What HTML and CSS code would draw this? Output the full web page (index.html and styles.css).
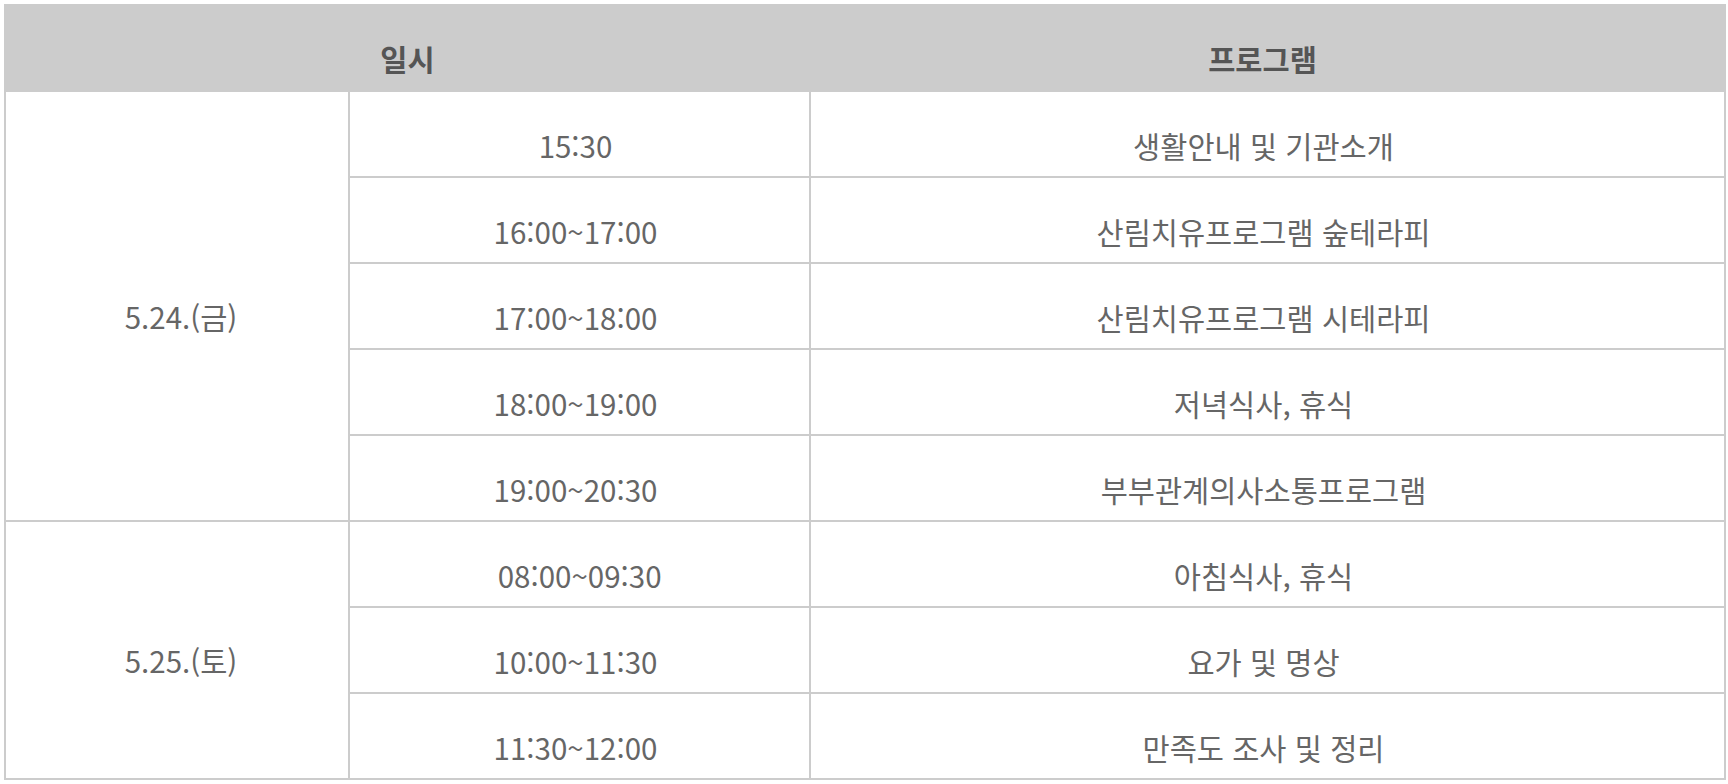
FILE: index.html
```html
<!DOCTYPE html>
<html lang="ko">
<head>
<meta charset="utf-8">
<title>일정표</title>
<link rel="stylesheet" href="styles.css">
</head>
<body>
<table class="schedule">
  <colgroup>
    <col class="c-date">
    <col class="c-time">
    <col class="c-prog">
  </colgroup>
  <thead>
    <tr><th colspan="2">일시</th><th class="h-prog">프로그램</th></tr>
  </thead>
  <tbody>
    <tr><td class="date" rowspan="5">5.24.(금)</td><td>15:30</td><td>생활안내 및 기관소개</td></tr>
    <tr><td>16:00~17:00</td><td>산림치유프로그램 숲테라피</td></tr>
    <tr><td>17:00~18:00</td><td>산림치유프로그램 시테라피</td></tr>
    <tr><td>18:00~19:00</td><td>저녁식사, 휴식</td></tr>
    <tr><td>19:00~20:30</td><td>부부관계의사소통프로그램</td></tr>
    <tr><td class="date" rowspan="3">5.25.(토)</td><td>&nbsp;08:00~09:30</td><td>아침식사, 휴식</td></tr>
    <tr><td>10:00~11:30</td><td>요가 및 명상</td></tr>
    <tr><td>11:30~12:00</td><td>만족도 조사 및 정리</td></tr>
  </tbody>
</table>
</body>
</html>
```

FILE: styles.css
```css
html, body {
  margin: 0;
  padding: 0;
  background: #fff;
}
body {
  padding: 4px 0 0 4px;
  font-family: "Noto Sans CJK KR", "Noto Sans", sans-serif;
}
.schedule {
  width: 1720px;
  border-collapse: collapse;
  table-layout: fixed;
  color: #666;
  font-size: 29.5px;
}
.c-date { width: 344px; }
.c-time { width: 461px; }
.c-prog { width: 915px; }
.schedule th,
.schedule td {
  border: 2px solid #cccccc;
  text-align: center;
  line-height: 40px;
  padding: 0;
  font-weight: 400;
}
.schedule th {
  background: #cccccc;
  color: #555;
  font-weight: 700;
  height: 87px;
  padding-top: 34px;
  box-sizing: border-box;
  vertical-align: top;
  border-top: 0;
}
.schedule th.h-prog {
  padding-right: 10px;
}
.schedule td {
  height: 86px;
  box-sizing: border-box;
  padding-top: 33px;
  padding-right: 8px;
  vertical-align: top;
}
.schedule td.date {
  vertical-align: middle;
  padding-top: 20px;
  padding-right: 0;
  padding-left: 8px;
}
```
